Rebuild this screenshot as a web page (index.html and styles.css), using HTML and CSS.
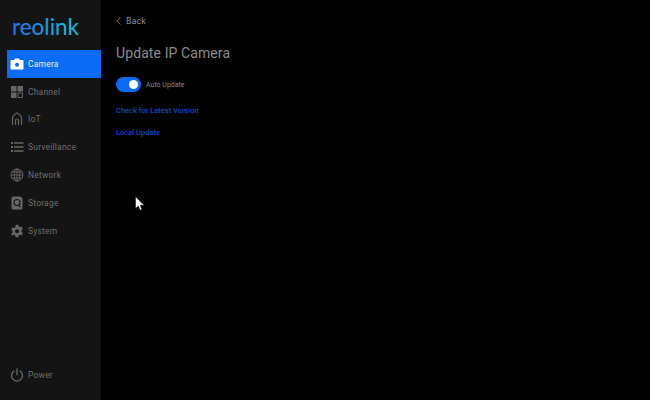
FILE: index.html
```html
<!DOCTYPE html>
<html lang="en">
<head>
<meta charset="utf-8">
<title>Update IP Camera</title>
<link rel="stylesheet" href="styles.css">
</head>
<body>
<div class="app">
  <aside class="sidebar">
    <svg class="logo" width="68" height="24" viewBox="0 0 68 24">
      <defs>
        <linearGradient id="lg" x1="0" y1="0" x2="1" y2="0">
          <stop offset="0" stop-color="#1c78f0"/>
          <stop offset="1" stop-color="#17c3d8"/>
        </linearGradient>
      </defs>
      <text x="0" y="19" class="logo-text" fill="url(#lg)" textLength="67" lengthAdjust="spacingAndGlyphs">reolink</text>
    </svg>
    <nav class="nav">
      <a class="item active">
        <svg class="ic" viewBox="0 0 14 14"><path fill="#fff" d="M1 3h3l1-1.5h4L10 3h3a.8.8 0 0 1 .5.8v8a.8.8 0 0 1-.8.7H1.300a.8.8 0 0 1-.8-.7v-8A.8.8 0 0 1 1 3z"/><circle cx="7" cy="7.800" r="2" fill="#0a6cf5"/></svg>
        <span>Camera</span>
      </a>
      <a class="item">
        <svg class="ic" viewBox="0 0 14 14"><path fill="#666" d="M1 1h5.500v5.500H1zM7.500 1H13v5.500H7.500zM1 7.500h5.500V13H1z"/><path fill="none" stroke="#666" d="M8 8h4.500v4.500H8z"/></svg>
        <span>Channel</span>
      </a>
      <a class="item">
        <svg class="ic" viewBox="0 0 14 14"><path fill="none" stroke="#666" stroke-width="1.200" d="M2.500 13V6.500C2.500 4 5 2 7 1c2 1 4.500 3 4.500 5.500V13"/><path fill="none" stroke="#666" stroke-width="1.200" d="M5.500 13V8.500a1.500 1.500 0 0 1 3 0V13"/></svg>
        <span>IoT</span>
      </a>
      <a class="item">
        <svg class="ic" viewBox="0 0 14 14"><path fill="#666" d="M1 2h2v2H1zM4 2.300h9.500v1.400H4zM1 6h2v2H1zM4 6.300h9.500v1.400H4zM1 10h2v2H1zM4 10.300h9.500v1.400H4z"/></svg>
        <span>Surveillance</span>
      </a>
      <a class="item">
        <svg class="ic" viewBox="0 0 14 14"><g fill="none" stroke="#666" stroke-width=".9"><circle cx="7" cy="7" r="6"/><ellipse cx="7" cy="7" rx="2.800" ry="6"/><path d="M1 7h12M1.800 4h10.400M1.800 10h10.400M7 1v12"/></g></svg>
        <span>Network</span>
      </a>
      <a class="item">
        <svg class="ic" viewBox="0 0 14 14"><path fill="#666" d="M3 .5h7.500L12.500 2.500V12a1.500 1.500 0 0 1-1.500 1.500H3A1.500 1.500 0 0 1 1.500 12V2A1.500 1.500 0 0 1 3 .5z"/><circle cx="7" cy="6.500" r="3" fill="none" stroke="#161616" stroke-width="1.100"/><path stroke="#161616" stroke-width="1.100" d="M8.500 9l2 2"/></svg>
        <span>Storage</span>
      </a>
      <a class="item">
        <svg class="ic" viewBox="0 0 14 14"><path fill="#666" fill-rule="evenodd" d="M5.700.8h2.600l.4 1.800 1.100.6 1.800-.6 1.300 2.300-1.400 1.200v1.800l1.400 1.200-1.300 2.300-1.800-.6-1.100.6-.4 1.800H5.700l-.4-1.800-1.100-.6-1.800.6L1.100 9.900l1.400-1.200V6.900L1.100 5.700l1.300-2.300 1.800.6 1.100-.6zM7 5.300a2 2 0 1 0 0 4 2 2 0 0 0 0-4z"/></svg>
        <span>System</span>
      </a>
    </nav>
    <a class="item power">
      <svg class="ic" viewBox="0 0 14 14"><g fill="none" stroke="#707070" stroke-width="1.200" stroke-linecap="round"><path d="M4 3A5.500 5.500 0 1 0 10 3"/><path d="M7 .8v6"/></g></svg>
      <span>Power</span>
    </a>
  </aside>
  <main class="main">
    <a class="back">
      <svg class="chev" width="5" height="8" viewBox="0 0 5 8"><path d="M4.300.5L.8 4l3.500 3.500" fill="none" stroke="#8a8a8a" stroke-width=".9"/></svg>
      <span>Back</span>
    </a>
    <h1 class="title">Update IP Camera</h1>
    <div class="auto">
      <span class="toggle"><span class="knob"></span></span>
      <span class="auto-label">Auto Update</span>
    </div>
    <a class="link first">Check for Latest Version</a>
    <a class="link">Local Update</a>
  </main>
  <svg class="cursor" width="10" height="15" viewBox="0 0 10 15"><path d="M.5.500v12l2.800-2.500 1.800 4.300 1.900-.8-1.800-4.200h3.800z" fill="#fff" stroke="#000" stroke-width=".5"/></svg>
</div>
</body>
</html>
```
FILE: styles.css
```css
* { box-sizing: border-box; }
html, body { margin: 0; padding: 0; }
body { background: #000; font-family: Roboto, "Liberation Sans", sans-serif; }
.app { position: relative; width: 650px; height: 400px; display: flex; overflow: hidden; background: #000; }
.sidebar { width: 101px; height: 400px; background: #141414; display: flex; flex-direction: column; padding-left: 7px; }
.logo { display: block; margin: 16px 0 0 5px; height: 24px; }
.logo-text { font-family: Lato, Roboto, sans-serif; font-size: 24px; font-weight: 400; }
.nav { display: flex; flex-direction: column; margin-top: 10px; }
.item { display: flex; align-items: center; height: 27.8px; padding-left: 3px; gap: 4px; color: #6e6e6e; font-size: 8.500px; letter-spacing: .2px; }
.item.active { background: #0a6cf5; color: #e8f0ff; }
.ic { width: 14px; height: 14px; flex: none; }
.power { margin-top: auto; margin-bottom: 11px; }
.main { flex: 1; padding: 0 0 0 15px; display: flex; flex-direction: column; align-items: flex-start; }
.back { display: flex; align-items: center; gap: 5px; margin-top: 15px; height: 12px; color: #8a8a8a; font-size: 9px; }
.title { margin: 17px 0 0; font-size: 14px; line-height: 18px; font-weight: 400; color: #8c8c8c; letter-spacing: .1px; }
.auto { display: flex; align-items: center; gap: 5px; margin-top: 15px; }
.toggle { width: 25px; height: 15px; border-radius: 8px; background: #0a6cf5; display: flex; align-items: center; justify-content: flex-end; padding-right: 3px; }
.knob { width: 9px; height: 9px; border-radius: 50%; background: #fff; }
.auto-label { font-size: 7px; color: #8a8a8a; }
.link { font-size: 7.500px; line-height: 10px; font-weight: 500; color: #0c48c4; margin-top: 12px; }
.link.first { margin-top: 14px; }
.cursor { position: absolute; left: 135px; top: 196px; }
```
